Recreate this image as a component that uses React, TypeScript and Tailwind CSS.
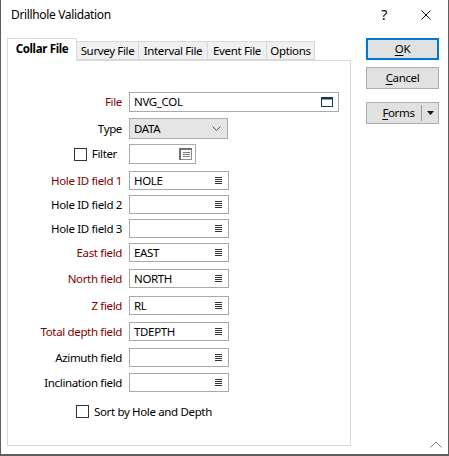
import React from 'react';

const font = { fontFamily: '"Noto Sans", "Segoe UI", sans-serif' };

function ListIcon() {
  return (
    <svg width="7" height="7" viewBox="0 0 7 7" className="shrink-0">
      <rect x="0" y="0" width="7" height="1" fill="#333" />
      <rect x="0" y="2" width="7" height="1" fill="#333" />
      <rect x="0" y="4" width="7" height="1" fill="#333" />
      <rect x="0" y="6" width="7" height="1" fill="#333" />
    </svg>
  );
}

function WindowIcon() {
  return (
    <svg width="12" height="10" viewBox="0 0 12 10">
      <rect x="0.5" y="0.5" width="11" height="9" fill="none" stroke="#1f3552" />
      <rect x="0" y="0" width="12" height="2.5" fill="#1f3552" />
    </svg>
  );
}

function FilterIcon() {
  return (
    <svg width="13" height="12" viewBox="0 0 13 12">
      <rect x="0.5" y="0.5" width="12" height="11" fill="none" stroke="#8a8a8a" />
      <rect x="0" y="0" width="13" height="2" fill="#6f6f6f" />
      <rect x="0" y="0" width="2" height="12" fill="#6f6f6f" />
      <rect x="4" y="4" width="7" height="1" fill="#7a7a7a" />
      <rect x="4" y="6" width="7" height="1" fill="#7a7a7a" />
      <rect x="4" y="8" width="7" height="1" fill="#7a7a7a" />
    </svg>
  );
}

function Label({ text, required }: { text: string; required?: boolean }) {
  return (
    <div
      className={`w-[114px] shrink-0 text-right ${
        required ? 'text-[#800000]' : 'text-black'
      }`}
    >
      {text}
    </div>
  );
}

function FieldBox({ value }: { value: string }) {
  return (
    <div className="ml-[7px] flex h-[19px] w-[100px] items-center justify-between border border-[#a9a9a9] bg-white pl-[4px] pr-[6px]">
      <span className="text-black">{value}</span>
      <ListIcon />
    </div>
  );
}

const fields = [
  { label: 'Hole ID field 1', value: 'HOLE', required: true, mt: 'mt-[7px]' },
  { label: 'Hole ID field 2', value: '', required: false, mt: 'mt-[5px]' },
  { label: 'Hole ID field 3', value: '', required: false, mt: 'mt-[5px]' },
  { label: 'East field', value: 'EAST', required: true, mt: 'mt-[5px]' },
  { label: 'North field', value: 'NORTH', required: true, mt: 'mt-[7px]' },
  { label: 'Z field', value: 'RL', required: true, mt: 'mt-[8px]' },
  { label: 'Total depth field', value: 'TDEPTH', required: true, mt: 'mt-[7px]' },
  { label: 'Azimuth field', value: '', required: false, mt: 'mt-[7px]' },
  { label: 'Inclination field', value: '', required: false, mt: 'mt-[6px]' },
];

const tabs = [
  { name: 'Survey File', w: 'w-[62px]' },
  { name: 'Interval File', w: 'w-[69px]' },
  { name: 'Event File', w: 'w-[59px]' },
  { name: 'Options', w: 'w-[48px]' },
];

function Checkbox() {
  return <div className="h-[13px] w-[13px] shrink-0 border border-[#333] bg-white" />;
}

export default function App() {
  return (
    <div
      className="relative h-[456px] w-[449px] overflow-hidden border-x border-b-2 border-[#5e5e5e] bg-white text-[11.5px] leading-none tracking-[-0.35px] text-black"
      style={font}
    >
      {/* title bar */}
      <div className="flex h-[30px] items-center">
        <span className="ml-[10px] flex-1 text-[12px]">Drillhole Validation</span>
        <span className="w-[14px] text-center text-[14px]">?</span>
        <div className="ml-[30px] mr-[17px] flex h-[10px] w-[10px] items-center justify-center">
          <svg width="10" height="10" viewBox="0 0 10 10">
            <path d="M0.5 0.5 L9.5 9.5 M9.5 0.5 L0.5 9.5" stroke="#111" strokeWidth="1" />
          </svg>
        </div>
      </div>

      <div className="flex">
        {/* tabs + panel */}
        <div className="ml-[6px] flex w-[344px] flex-col">
          <div className="mt-[8px] flex h-[22px] items-end">
            <div className="relative z-10 -mb-px flex h-[23px] w-[70px] items-center justify-center border border-b-0 border-[#d9d9d9] bg-white pb-[2px] font-bold">
              Collar File
            </div>
            {tabs.map((t) => (
              <div
                key={t.name}
                className={`flex h-[19px] ${t.w} items-center justify-center border border-l-0 border-[#d9d9d9] bg-[#f0f0f0]`}
              >
                {t.name}
              </div>
            ))}
          </div>
          <div className="flex h-[386px] flex-col border border-[#d9d9d9] bg-white">
            {/* File */}
            <div className="mt-[31px] flex items-center">
              <Label text="File" required />
              <div className="ml-[7px] flex h-[20px] w-[210px] items-center justify-between border border-[#a9a9a9] pl-[4px] pr-[5px]">
                <span>NVG_COL</span>
                <WindowIcon />
              </div>
            </div>
            {/* Type */}
            <div className="mt-[6px] flex items-center">
              <Label text="Type" />
              <div className="ml-[7px] flex h-[21px] w-[99px] items-center justify-between border border-[#adadad] bg-[#e5e5e5] pl-[4px] pr-[6px]">
                <span>DATA</span>
                <svg width="9" height="5" viewBox="0 0 9 5">
                  <path d="M0.5 0.5 L4.5 4.5 L8.5 0.5" fill="none" stroke="#555" strokeWidth="1" />
                </svg>
              </div>
            </div>
            {/* Filter */}
            <div className="mt-[5px] flex items-center">
              <div className="flex w-[114px] shrink-0 items-center justify-end gap-[5px]">
                <Checkbox />
                <span className="pr-[5px]">Filter</span>
              </div>
              <div className="ml-[7px] flex h-[20px] w-[67px] items-center justify-end border border-[#a9a9a9] pr-[3px]">
                <FilterIcon />
              </div>
            </div>
            {fields.map((f) => (
              <div key={f.label} className={`${f.mt} flex items-center`}>
                <Label text={f.label} required={f.required} />
                <FieldBox value={f.value} />
              </div>
            ))}
            <div className="mt-[13px] flex items-center gap-[5px] pl-[68px]">
              <Checkbox />
              <span>Sort by Hole and Depth</span>
            </div>
          </div>
        </div>

        {/* buttons */}
        <div className="ml-[15px] mt-[8px] flex w-[73px] flex-col">
          <div className="flex h-[22px] items-center justify-center border-2 border-[#0078d7] bg-[#e1e1e1]">
            <span>
              <span className="underline underline-offset-2">O</span>K
            </span>
          </div>
          <div className="mt-[7px] flex h-[22px] items-center justify-center border border-[#adadad] bg-[#e1e1e1]">
            <span>
              <span className="underline underline-offset-2">C</span>ancel
            </span>
          </div>
          <div className="mt-[13px] flex h-[22px] items-center border border-[#adadad] bg-[#e1e1e1]">
            <span className="flex-1 pl-[9px] text-center">
              <span className="underline underline-offset-2">F</span>orms
            </span>
            <div className="h-[16px] w-px bg-[#9a9a9a]" />
            <div className="flex w-[16px] items-center justify-center">
              <svg width="7" height="4" viewBox="0 0 7 4">
                <path d="M0 0 L7 0 L3.5 4 Z" fill="#111" />
              </svg>
            </div>
          </div>
        </div>
      </div>

      {/* corner caret */}
      <div className="absolute bottom-[6px] right-[6px]">
        <svg width="12" height="7" viewBox="0 0 12 7">
          <path d="M0.5 6.5 L6 1 L11.5 6.5" fill="none" stroke="#777" strokeWidth="1" />
        </svg>
      </div>
    </div>
  );
}
